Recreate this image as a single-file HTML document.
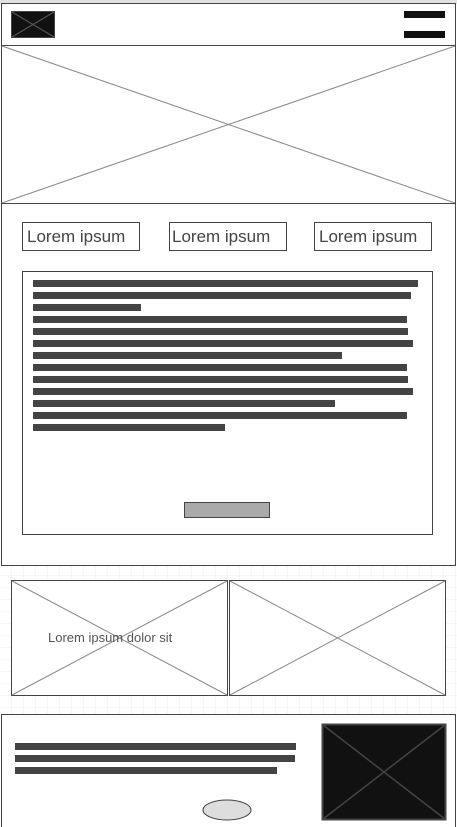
<!DOCTYPE html>
<html><head><style>html,body{margin:0;padding:0;background:#fff;width:457px;height:827px;overflow:hidden}svg{display:block}</style></head><body>
<svg width="457" height="827" viewBox="0 0 457 827" xmlns="http://www.w3.org/2000/svg">
<defs><pattern id="g" width="12" height="12" patternUnits="userSpaceOnUse"><path d="M12 0V12H0" fill="none" stroke="#eee" stroke-width="1"/></pattern></defs>
<rect width="457" height="827" fill="#fff"/>
<rect x="0" y="0" width="457" height="4" fill="#e2e2e2"/>
<rect x="0" y="566" width="457" height="148" fill="url(#g)"/>
<rect x="1.5" y="3.5" width="454" height="42" fill="#fff" stroke="#444"/>
<rect x="11.5" y="11.5" width="43" height="26" fill="#111" stroke="#444"/>
<path d="M12 12L54 37M54 12L12 37" stroke="#555" stroke-width="1.2"/>
<rect x="404" y="11" width="41" height="7" fill="#111"/>
<rect x="404" y="31" width="41" height="7" fill="#111"/>
<rect x="1.5" y="45.5" width="454" height="158" fill="#fff" stroke="#444"/>
<path d="M2 46L455 203M455 46L2 203" stroke="#888"/>
<rect x="1.5" y="203.5" width="454" height="362" fill="#fff" stroke="#444"/>
<g fill="#fff" stroke="#444"><rect x="22.5" y="222.5" width="117" height="28"/><rect x="169.5" y="222.5" width="117" height="28"/><rect x="314.5" y="222.5" width="117" height="28"/></g>
<g font-family="Liberation Sans, sans-serif" font-size="17" fill="#444"><text x="27" y="242">Lorem ipsum</text><text x="172" y="242">Lorem ipsum</text><text x="319" y="242">Lorem ipsum</text></g>
<rect x="22.5" y="271.5" width="410" height="263" fill="#fff" stroke="#444"/>
<g fill="#444">
<rect x="33" y="280" width="385" height="7"/><rect x="33" y="292" width="378" height="7"/><rect x="33" y="304" width="108" height="7"/>
<rect x="33" y="316" width="374" height="7"/><rect x="33" y="328" width="375" height="7"/><rect x="33" y="340" width="380" height="7"/>
<rect x="33" y="352" width="309" height="7"/><rect x="33" y="364" width="374" height="7"/><rect x="33" y="376" width="375" height="7"/>
<rect x="33" y="388" width="380" height="7"/><rect x="33" y="400" width="302" height="7"/><rect x="33" y="412" width="374" height="7"/>
<rect x="33" y="424" width="192" height="7"/></g>
<rect x="184.5" y="502.5" width="85" height="15" fill="#aaa" stroke="#444"/>
<rect x="11.5" y="580.5" width="216" height="115" fill="#fff" stroke="#444"/>
<path d="M12 581L227 695M227 581L12 695" stroke="#888"/>
<rect x="229.5" y="580.5" width="216" height="115" fill="#fff" stroke="#444"/>
<path d="M230 581L445 695M445 581L230 695" stroke="#888"/>
<text x="48" y="642" font-family="Liberation Sans, sans-serif" font-size="13" fill="#555">Lorem ipsum dolor sit</text>
<rect x="1.5" y="714.5" width="454" height="114" fill="#fff" stroke="#444"/>
<g fill="#444"><rect x="15" y="743" width="281" height="7"/><rect x="15" y="755" width="280" height="7"/><rect x="15" y="767" width="262" height="7"/></g>
<rect x="322.5" y="724.5" width="123" height="95" fill="#111" stroke="#444" stroke-width="2"/>
<path d="M323 725L445 819M445 725L323 819" stroke="#444" stroke-width="1.5"/>
<ellipse cx="227" cy="810" rx="24" ry="10" fill="#ddd" stroke="#444"/>
</svg>
</body></html>
